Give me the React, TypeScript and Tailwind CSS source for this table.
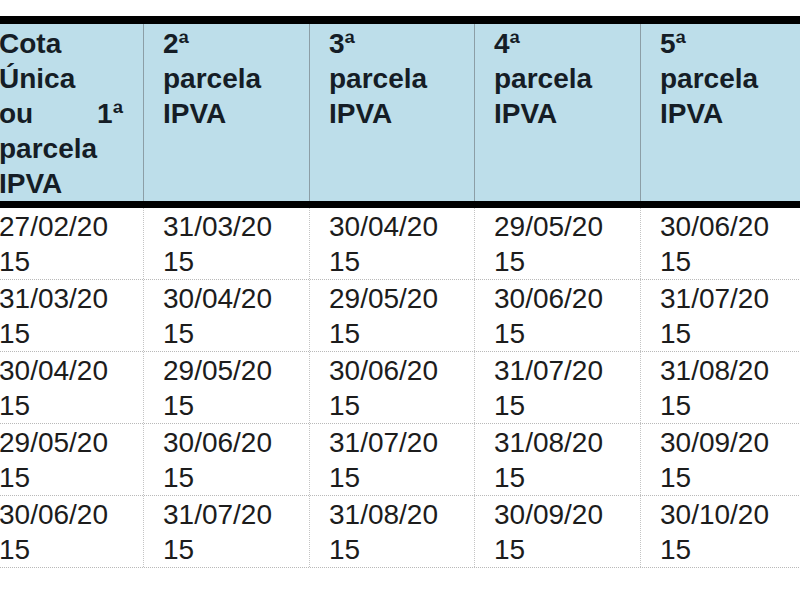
const headers = ["2ª", "3ª", "4ª", "5ª"];

const rows = [
  ["27/02/20", "31/03/20", "30/04/20", "29/05/20", "30/06/20"],
  ["31/03/20", "30/04/20", "29/05/20", "30/06/20", "31/07/20"],
  ["30/04/20", "29/05/20", "30/06/20", "31/07/20", "31/08/20"],
  ["29/05/20", "30/06/20", "31/07/20", "31/08/20", "30/09/20"],
  ["30/06/20", "31/07/20", "31/08/20", "30/09/20", "30/10/20"],
];

// column widths so the rules land where the screenshot has them
const widths = ["w-[164px]", "w-[166px]", "w-[165px]", "w-[166px]", "w-[166px]"];

export default function App() {
  return (
    <div
      className="w-[800px] h-[600px] overflow-hidden bg-white pt-4"
      style={{ fontFamily: '"Liberation Sans", Arial, sans-serif' }}
    >
      <div className="-ml-[21px] w-[840px]">
        <div className="flex border-t-8 border-b-[7px] border-black bg-[#bddeea] text-[#151d26] text-[28px] leading-[35px] font-bold">
          <div className={`${widths[0]} shrink-0 pt-[2px] pl-[20px] pr-[20px]`}>
            <div>Cota</div>
            <div>Única</div>
            <div className="flex justify-between">
              <span>ou</span>
              <span>1ª</span>
            </div>
            <div>parcela</div>
            <div>IPVA</div>
          </div>
          {headers.map((h, i) => (
            <div
              key={h}
              className={`${widths[i + 1]} shrink-0 pt-[2px] pl-[19px] pr-[20px] border-l border-[#8c9ea6]`}
            >
              <div>{h}</div>
              <div>parcela</div>
              <div>IPVA</div>
            </div>
          ))}
        </div>
        {rows.map((r, ri) => (
          <div key={ri} className="flex border-b border-dotted border-[#b9b9b9] text-[#1c1c1c]">
            {r.map((d, i) => (
              <div
                key={i}
                className={`${widths[i]} shrink-0 pt-[1px] text-[28px] leading-[35px] ${
                  i === 0 ? "pl-[20px]" : "pl-[19px] border-l border-dotted border-[#c4c4c4]"
                }`}
              >
                <div>{d}</div>
                <div>15</div>
              </div>
            ))}
          </div>
        ))}
      </div>
    </div>
  );
}
